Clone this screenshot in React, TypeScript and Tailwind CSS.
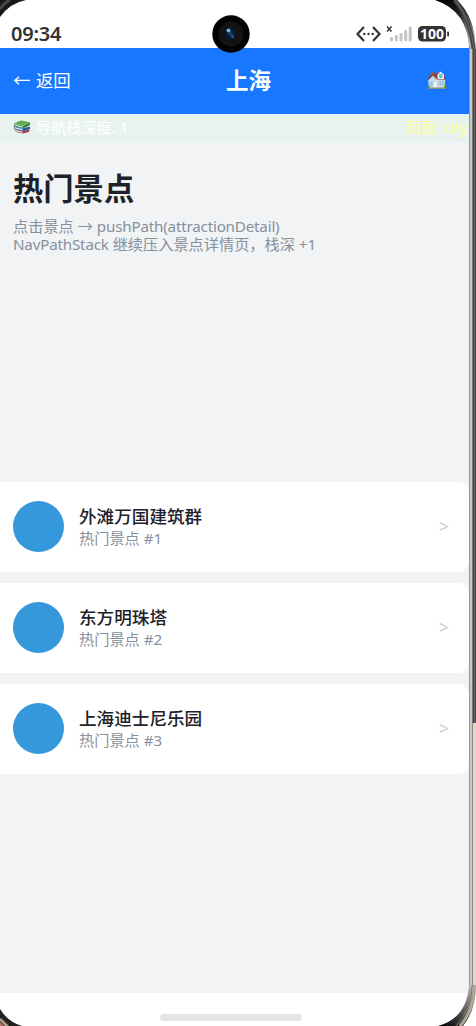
import React from 'react'

interface Attraction {
  id: number
  name: string
}

const attractions: Attraction[] = [
  { id: 1, name: '外滩万国建筑群' },
  { id: 2, name: '东方明珠塔' },
  { id: 3, name: '上海迪士尼乐园' },
]

const BooksIcon: React.FC = () => (
  <svg className="mr-[5px] shrink-0" width="18" height="14" viewBox="0 0 18 14">
    <path d="M2 9.500 L10 11 L16.500 9.500 L16 12 L10 13.500 L3 12 Z" fill="#b53a3a" />
    <path d="M2.500 9.800 L10 11.800 L10 12.800 L3 11.500 Z" fill="#e6dedb" />
    <path d="M0.800 6 L9 8.500 L17 6.500 V9 L10 11.500 L1 9.300 Z" fill="#2d5da1" />
    <path d="M1.500 7 L9.500 9.300 V10.600 L1.500 8.600 Z" fill="#dde7f0" />
    <path d="M1.500 3.200 L10 6 L17 2.500 V5 L10 8.500 L1.200 6 Z" fill="#2f7d36" />
    <path d="M2 4.300 L10 6.800 V7.700 L2 5.500 Z" fill="#dfe8dc" />
    <path d="M1.500 3 L8 0.600 L17 2.200 L10 5.800 Z" fill="#5cab4d" />
  </svg>
)

const HouseIcon: React.FC = () => (
  <svg width="20" height="19" viewBox="0 0 20 19">
    <path d="M2 8 V17 H18 V8 Z" fill="#d8d3d3" />
    <path d="M1 8.500 L4 2 H16.500 L19 8.500 Z" fill="#804746" />
    <rect x="4" y="0.500" width="2.300" height="4" fill="#9c5b52" />
    <path d="M10.500 3.500 L13.500 0.500 L17 3.500 V8 H10.500 Z" fill="#e5edf3" />
    <rect x="12.200" y="3" width="3" height="4" fill="#59b9e8" />
    <path d="M1.500 10.500 L6 5.500 L10.500 10.500 V17 H1.500 Z" fill="#c5dcea" />
    <path d="M1 10.500 L6 5.200 L11 10.500" fill="none" stroke="#f0eeee" />
    <rect x="3.200" y="10.500" width="2.500" height="4.500" fill="#8cc9ea" />
    <rect x="7" y="11" width="2.500" height="6" fill="#edf4f8" />
    <rect x="12.500" y="10" width="4" height="4" fill="#68b6de" />
    <path d="M14.500 10 V14 M12.500 12 H16.500" stroke="#eee" strokeWidth="0.600" />
    <rect x="1" y="16.500" width="18" height="1.500" fill="#8f8b84" />
    <circle cx="1.500" cy="15.500" r="1.500" fill="#459650" />
    <circle cx="18.500" cy="15.500" r="1.500" fill="#459650" />
  </svg>
)

const StatusBar: React.FC = () => (
  <div className="relative flex h-12 shrink-0 items-start justify-between bg-white pl-[11px] pr-5 pt-[22px]">
    <span className="text-[20px] font-semibold leading-6 tracking-[-0.2px] text-[#333]">09:34</span>
    <svg width="94" height="24" viewBox="0 0 94 24" fill="none">
      <g stroke="#333" strokeWidth="2.2">
        <path d="M9 5 L2.500 12 L9 19" />
        <path d="M18 5 L24.500 12 L18 19" />
      </g>
      <g fill="#333">
        <circle cx="9.300" cy="12" r="1.200" />
        <circle cx="13.500" cy="12" r="1.200" />
        <circle cx="17.700" cy="12" r="1.200" />
      </g>
      <path d="M32 4.500 l4.500 5 M36.500 4.500 l-4.500 5" stroke="#333" strokeWidth="1.500" />
      <g fill="#c4c4c4">
        <rect x="35" y="15" width="3" height="4.500" rx="1.400" />
        <rect x="39.800" y="13" width="3" height="6.500" rx="1.400" />
        <rect x="44.500" y="11" width="3" height="8.500" rx="1.400" />
        <rect x="49.200" y="8" width="3" height="11.500" rx="1.400" />
        <rect x="53.700" y="4.500" width="3" height="15" rx="1.400" />
      </g>
      <rect x="63" y="4" width="28" height="15.500" rx="4.500" fill="#333" />
      <rect x="92.200" y="9.500" width="1.800" height="5" rx="0.800" fill="#333" />
      <text x="77" y="16.800" textAnchor="middle" fontSize="14" fontWeight="700" fill="#fff">100</text>
    </svg>
    <svg className="absolute left-[212px] top-[15px] z-10" width="38" height="38" viewBox="0 0 38 38">
      <defs>
        <radialGradient id="lens">
          <stop offset="0" stopColor="#1d4a76" />
          <stop offset="0.5" stopColor="#0d1b30" />
          <stop offset="1" stopColor="#111113" />
        </radialGradient>
      </defs>
      <circle cx="19" cy="19" r="18.700" fill="#020203" />
      <circle cx="19" cy="19" r="12.500" fill="#131315" />
      <circle cx="18.500" cy="19" r="7" fill="url(#lens)" />
      <circle cx="16.500" cy="15.500" r="2" fill="#6fb0e0" />
      <circle cx="20.500" cy="21.500" r="1.300" fill="#2f5f9f" />
    </svg>
  </div>
)

const AttractionCard: React.FC<{ attraction: Attraction }> = ({ attraction }) => (
  <div className="-ml-[9px] flex h-[90.500px] items-center rounded-[11px] bg-white pl-[22px] pr-5">
    <div className="size-[51px] rounded-full bg-[#3498db]" />
    <div className="ml-[15px] flex-1">
      <div className="text-[17.600px] font-medium leading-[22px] text-[#1d2129]">{attraction.name}</div>
      <div className="text-[15.200px] leading-[22px] text-[#86909c]">热门景点 #{attraction.id}</div>
    </div>
    <span className="-mt-px text-[18px] leading-6 text-[#c9cdd4]">&gt;</span>
  </div>
)

const PhoneFrame: React.FC = () => (
  <svg className="pointer-events-none absolute inset-0 z-20" width="476" height="1026" viewBox="0 0 476 1026" fill="none">
    <defs>
      <linearGradient id="shade" x1="440" y1="0" x2="466" y2="46" gradientUnits="userSpaceOnUse">
        <stop offset="0" stopColor="#000" />
        <stop offset="0.4" stopColor="#222" />
        <stop offset="1" stopColor="#b5b5b5" />
      </linearGradient>
      <linearGradient id="shadeBottom" x1="440" y1="1026" x2="471" y2="985" gradientUnits="userSpaceOnUse">
        <stop offset="0" stopColor="#000" />
        <stop offset="0.4" stopColor="#444" />
        <stop offset="1" stopColor="#b8b8b8" />
      </linearGradient>
    </defs>
    {/* top right */}
    <path d="M457 0 Q475 18 476 54 V0 Z" fill="#fff" />
    <path d="M435 0 Q468 11 469 49 H476 Q475 17 457 0 Z" fill="url(#shade)" />
    <path d="M454.500 0 Q471 18 474 54" stroke="#444" strokeWidth="4" />
    <path d="M455 0 Q471.500 20 474.500 54" stroke="#777" strokeWidth="0.700" />
    {/* right edge */}
    <path d="M469 49 H476 V986 H469 Z" fill="#c9c9c9" />
    <path d="M469.500 46 V986" stroke="#979797" />
    <path d="M472.500 49 V723" stroke="#777" />
    <path d="M474.500 49 V723" stroke="#484848" strokeWidth="3" />
    <path d="M474.500 49 V723" stroke="#777" strokeWidth="0.600" />
    <path d="M472.500 723 V986" stroke="#8e887e" />
    <path d="M474.500 723 V986" stroke="#ded6c9" strokeWidth="3" />
    {/* bottom right */}
    <path d="M476 985 V1026 H462 Q475 1010 476 985 Z" fill="#fff" />
    <path d="M469 985 Q467 1018 438 1026 H463 Q476 1010 476 985 Z" fill="url(#shadeBottom)" />
    <path d="M474.500 985 Q474 1010 460 1026" stroke="#b0a696" strokeWidth="3" />
    <path d="M472.300 985 Q471 1010 456 1026" stroke="#80796d" />
    {/* left corners */}
    <path d="M0 0 H26 Q10 3 0 17 Z" fill="#181818" />
    <path d="M0 9 Q4 3 10 0" stroke="#484848" strokeWidth="3" />
    <path d="M0 1009 Q8 1022 22 1026 H0 Z" fill="#222" />
    <path d="M0 1019 Q4 1023 8 1027" stroke="#a59b8b" strokeWidth="3" />
    <path d="M0 1022 L4 1026 H0 Z" fill="#b87565" />
  </svg>
)

export default function App() {
  return (
    <div className="relative h-[1026px] w-[476px] overflow-hidden bg-white font-['Noto_Sans','Noto_Sans_CJK_SC',sans-serif]">
      <div className="flex h-full w-[469px] flex-col overflow-hidden">
        <StatusBar />

        <header className="flex h-[65.500px] shrink-0 items-center bg-[#1877ff] pl-[13px] pr-[22px] text-white">
          <button className="-mt-0.5 w-20 whitespace-nowrap text-left text-[17.400px] leading-6">
            ← <span className="ml-px">返回</span>
          </button>
          <h1 className="flex-1 pr-[23px] text-center text-[22.500px] font-bold leading-8">上海</h1>
          <HouseIcon />
        </header>

        <div className="flex h-7 shrink-0 items-start justify-between whitespace-nowrap bg-[#e8f3ef] pl-[13px] pt-[3px] text-[15.200px] leading-5">
          <span className="flex items-center text-white">
            <BooksIcon />
            导航栈深度: 1
          </span>
          <span className="mr-px text-[#ffff99]">页面: city</span>
        </div>

        <main className="flex flex-1 flex-col bg-[#f1f3f5]">
          <div className="h-[340px] shrink-0 px-[13px] pt-[27px]">
            <h2 className="text-[30.300px] font-bold leading-10 text-[#1d2129]">热门景点</h2>
            <div className="mt-2 whitespace-nowrap text-[15.200px] leading-[18px] text-[#86909c]">
              <p>
                点击景点 → <span className="tracking-[-0.2px]">pushPath(attractionDetail)</span>
              </p>
              <p>
                <span className="tracking-[-0.2px]">NavPathStack</span> 继续压入景点详情页，栈深 +1
              </p>
            </div>
          </div>
          <div className="flex flex-col gap-[10.500px]">
            {attractions.map((a) => (
              <AttractionCard key={a.id} attraction={a} />
            ))}
          </div>
        </main>

        <div className="flex h-[33px] shrink-0 bg-white pl-40 pt-[21px]">
          <div className="h-[7px] w-[142px] rounded-full bg-[#e5e5e5]" />
        </div>
      </div>
      <PhoneFrame />
    </div>
  )
}
